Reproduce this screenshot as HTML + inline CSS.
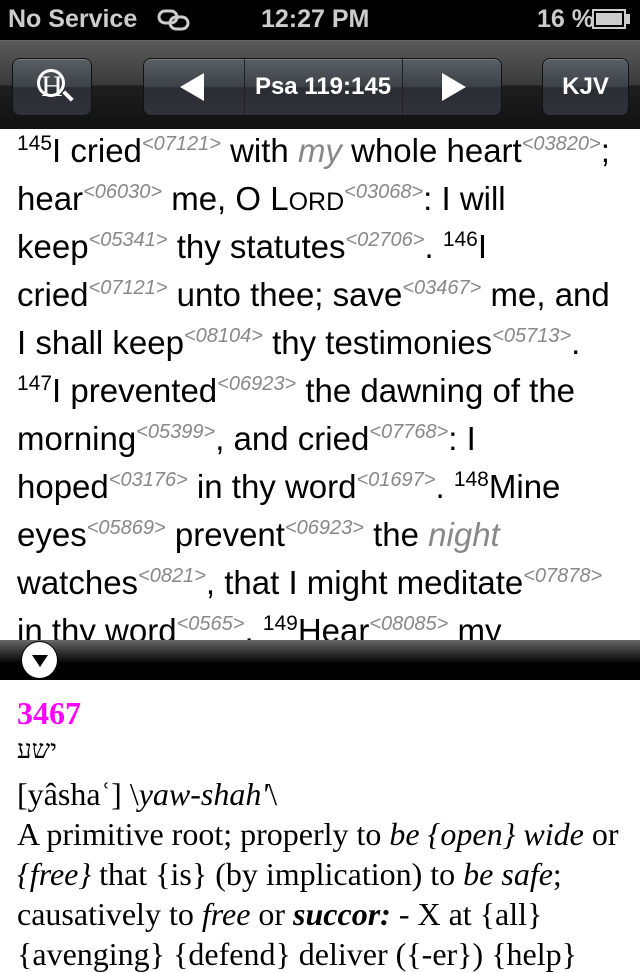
<!DOCTYPE html>
<html><head><meta charset="utf-8"><style>
body{margin:0;width:640px;height:960px;overflow:hidden;background:#fff;position:relative;font-family:"Liberation Sans",sans-serif}
.sb{position:absolute;left:0;top:0;width:640px;height:40px;background:#000;color:#ccc;font-size:25px;font-weight:bold}
.sb span{position:absolute;top:5px}
.tb{position:absolute;left:0;top:40px;width:640px;height:88px;background:linear-gradient(#5a5a5a,#3a3a3a 50%,#1e1e1e 51%,#111);border-top:1px solid #666}
.btn{position:absolute;top:17px;height:56px;border-radius:8px;border:1px solid #111;background:linear-gradient(#5a5f66,#3c4047 50%,#2a2d33 51%,#30333a);box-shadow:inset 0 1px 0 rgba(255,255,255,.2);color:#fff;font-weight:bold;font-size:24px;text-align:center;line-height:56px}
.ln{position:absolute;left:17px;white-space:nowrap;font-size:33px;color:#000}
.ln sup{font-size:20px;color:#888;font-style:italic;vertical-align:12px;line-height:0}
.ln sup.n{font-style:normal;color:#000;font-size:21px}
.it{color:#888;font-style:italic}
.sc{font-size:25px}
.bar{position:absolute;left:0;top:640px;width:640px;height:40px;background:linear-gradient(#666,#000 60%)}
.dl{position:absolute;left:17px;white-space:nowrap;font-family:"Liberation Serif",serif;font-size:32px;color:#000}
</style></head><body>
<div class="sb"><span style="left:8px">No Service</span>
<svg style="position:absolute;left:157px;top:9px" width="34" height="22" viewBox="0 0 34 22"><rect x="2" y="2" width="18" height="12" rx="6" fill="none" stroke="#ccc" stroke-width="3"/><rect x="13" y="8" width="18" height="12" rx="6" fill="none" stroke="#ccc" stroke-width="3"/></svg>
<span style="left:261px">12:27 PM</span><span style="left:537px">16 %</span>
<span style="left:592px;top:9px;width:34px;height:20px;border:2px solid #ccc;box-sizing:border-box;background:#000"></span><span style="left:596px;top:13px;width:26px;height:12px;background:#ccc"></span><span style="left:626px;top:14px;width:4px;height:10px;background:#ccc"></span></div>
<div class="tb">
<div class="btn" style="left:12px;width:78px;font-family:'Liberation Serif',serif;font-weight:normal;font-size:30px;line-height:56px">H<span style="position:absolute;left:24px;top:10px;width:22px;height:22px;border:3px solid #fff;border-radius:50%"></span><span style="position:absolute;left:49px;top:35px;width:12px;height:4px;background:#fff;transform:rotate(45deg)"></span></div>
<div class="btn" style="left:143px;width:357px;"><div style="position:absolute;left:100px;top:0;width:1px;height:56px;background:#222"></div><div style="position:absolute;left:258px;top:0;width:1px;height:56px;background:#222"></div>
<span style="position:absolute;left:36px;top:14px;width:0;height:0;border-top:14px solid transparent;border-bottom:14px solid transparent;border-right:24px solid #fff"></span>
<span style="position:absolute;left:100px;width:158px">Psa 119:145</span>
<span style="position:absolute;left:298px;top:14px;width:0;height:0;border-top:14px solid transparent;border-bottom:14px solid transparent;border-left:24px solid #fff"></span></div>
<div class="btn" style="left:542px;width:85px">KJV</div>
</div>
<div class="ln" style="top:132px"><sup class="n">145</sup>I cried<sup>&lt;07121&gt;</sup> with <span class="it">my</span> whole heart<sup>&lt;03820&gt;</sup>;</div>
<div class="ln" style="top:180px">hear<sup>&lt;06030&gt;</sup> me, O L<span class="sc">ORD</span><sup>&lt;03068&gt;</sup>: I will</div>
<div class="ln" style="top:228px">keep<sup>&lt;05341&gt;</sup> thy statutes<sup>&lt;02706&gt;</sup>. <sup class="n">146</sup>I</div>
<div class="ln" style="top:276px">cried<sup>&lt;07121&gt;</sup> unto thee; save<sup>&lt;03467&gt;</sup> me, and</div>
<div class="ln" style="top:324px">I shall keep<sup>&lt;08104&gt;</sup> thy testimonies<sup>&lt;05713&gt;</sup>.</div>
<div class="ln" style="top:372px"><sup class="n">147</sup>I prevented<sup>&lt;06923&gt;</sup> the dawning of the</div>
<div class="ln" style="top:420px">morning<sup>&lt;05399&gt;</sup>, and cried<sup>&lt;07768&gt;</sup>: I</div>
<div class="ln" style="top:468px">hoped<sup>&lt;03176&gt;</sup> in thy word<sup>&lt;01697&gt;</sup>. <sup class="n">148</sup>Mine</div>
<div class="ln" style="top:516px">eyes<sup>&lt;05869&gt;</sup> prevent<sup>&lt;06923&gt;</sup> the <span class="it">night</span></div>
<div class="ln" style="top:564px">watches<sup>&lt;0821&gt;</sup>, that I might meditate<sup>&lt;07878&gt;</sup></div>
<div class="ln" style="top:612px">in thy word<sup>&lt;0565&gt;</sup>. <sup class="n">149</sup>Hear<sup>&lt;08085&gt;</sup> my</div>
<div class="bar"><div style="position:absolute;left:21px;top:1px;width:35px;height:36px;border-radius:50%;background:#fff;border:1px solid #000"><span style="position:absolute;left:10px;top:13px;border-left:8px solid transparent;border-right:8px solid transparent;border-top:12px solid #000"></span></div></div>
<div class="dl" style="top:695px;color:#f0f;font-weight:bold">3467</div>
<div class="dl" style="top:735px;font-family:'DejaVu Serif',serif;font-size:26px">ישע</div>
<div class="dl" style="top:776px">[yâshaʿ] \<i>yaw-shah'</i>\</div>
<div class="dl" style="top:816px">A primitive root; properly to <i>be {open} wide</i> or</div>
<div class="dl" style="top:856px"><i>{free}</i> that {is} (by implication) to <i>be safe</i>;</div>
<div class="dl" style="top:896px">causatively to <i>free</i> or <b><i>succor:</i></b> - X at {all}</div>
<div class="dl" style="top:936px">{avenging} {defend} deliver ({-er}) {help}</div>
</body></html>
